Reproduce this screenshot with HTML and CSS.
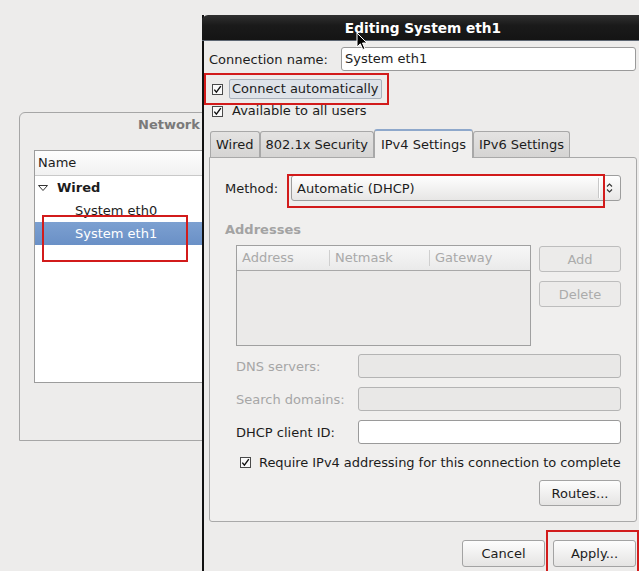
FILE: index.html
```html
<!DOCTYPE html>
<html>
<head>
<meta charset="utf-8">
<link rel="stylesheet" href="styles.css">
</head>
<body>
<div class="desktop">
  <div class="netwin">
    <div class="netwin-title">Network Connections</div>
    <div class="tree">
      <div class="tree-head">Name</div>
      <div class="tree-row group"><svg class="expander" width="10" height="6" viewBox="0 0 10 6"><path d="M0.5 0.5 H9.5 L5 5.5 Z" fill="none" stroke="#333" stroke-width="1"/></svg>Wired</div>
      <div class="tree-row child">System eth0</div>
      <div class="tree-row child selected">System eth1</div>
    </div>
  </div>

  <div class="dialog">
    <div class="titlebar">Editing System eth1</div>
    <div class="dlg-body">
      <div class="conn-row">
        <span class="conn-label">Connection name:</span>
        <div class="entry conn-entry">System eth1</div>
      </div>
      <div class="check-row first">
        <svg class="cb" width="11" height="11" viewBox="0 0 11 11"><rect x="0.5" y="0.5" width="10" height="10" fill="#fafafa" stroke="#4a4a4a"/><path d="M2.3 5.6 L4.4 8.2 L8.8 2.2" fill="none" stroke="#111" stroke-width="1.4"/></svg>
        <span class="cb-text prelight">Connect automatically</span>
      </div>
      <div class="check-row">
        <svg class="cb" width="11" height="11" viewBox="0 0 11 11"><rect x="0.5" y="0.5" width="10" height="10" fill="#fafafa" stroke="#4a4a4a"/><path d="M2.3 5.6 L4.4 8.2 L8.8 2.2" fill="none" stroke="#111" stroke-width="1.4"/></svg>
        <span class="cb-text">Available to all users</span>
      </div>

      <div class="notebook">
        <div class="tabs">
          <div class="tab">Wired</div>
          <div class="tab">802.1x Security</div>
          <div class="tab active">IPv4 Settings</div>
          <div class="tab">IPv6 Settings</div>
        </div>
        <div class="page">
          <div class="method-row">
            <span class="method-label">Method:</span>
            <div class="combo">
              <span class="combo-text">Automatic (DHCP)</span>
              <span class="combo-sep"></span>
              <svg class="combo-arrows" width="7" height="12" viewBox="0 0 7 12"><path d="M1 4.5 L3.5 2 L6 4.5 M1 7.5 L3.5 10 L6 7.5" fill="none" stroke="#333" stroke-width="1.1"/></svg>
            </div>
          </div>
          <div class="section-title">Addresses</div>
          <div class="addr-area">
            <div class="addr-table">
              <div class="addr-head">
                <span class="col c1">Address</span>
                <span class="col c2">Netmask</span>
                <span class="col c3">Gateway</span>
              </div>
            </div>
            <div class="addr-buttons">
              <button class="btn disabled">Add</button>
              <button class="btn disabled">Delete</button>
            </div>
          </div>
          <div class="form-grid">
            <span class="flabel disabled">DNS servers:</span>
            <div class="entry disabled"></div>
            <span class="flabel disabled">Search domains:</span>
            <div class="entry disabled"></div>
            <span class="flabel">DHCP client ID:</span>
            <div class="entry"></div>
          </div>
          <div class="require-row">
            <svg class="cb" width="11" height="11" viewBox="0 0 11 11"><rect x="0.5" y="0.5" width="10" height="10" fill="#fafafa" stroke="#4a4a4a"/><path d="M2.3 5.6 L4.4 8.2 L8.8 2.2" fill="none" stroke="#111" stroke-width="1.4"/></svg>
            <span class="require-text">Require IPv4 addressing for this connection to complete</span>
          </div>
          <div class="routes-row"><button class="btn">Routes...</button></div>
        </div>
      </div>

      <div class="actions">
        <button class="btn">Cancel</button>
        <button class="btn">Apply...</button>
      </div>
    </div>
  </div>

  <div class="mark mark-auto"></div>
  <div class="mark mark-eth1"></div>
  <div class="mark mark-method"></div>
  <div class="mark mark-apply"></div>

  <svg class="cursor" width="13" height="20" viewBox="0 0 13 20"><path d="M1 1 L1 15 L4.3 11.8 L6.8 17.5 L8.9 16.6 L6.5 11 L11 11 Z" fill="#000" stroke="#fff" stroke-width="1" stroke-linejoin="round"/></svg>
</div>
</body>
</html>
```

FILE: styles.css
```css
* { box-sizing: border-box; }
html, body { margin: 0; padding: 0; }
body {
  background: #edeceb;
  font-family: "DejaVu Sans", sans-serif;
  font-size: 13px;
  color: #1c1c1c;
  width: 639px;
  height: 571px;
  overflow: hidden;
}
.desktop {
  position: relative;
  width: 639px;
  height: 571px;
  overflow: hidden;
}

/* background window */
.netwin {
  position: absolute;
  left: 19px;
  top: 112px;
  width: 330px;
  height: 329px;
  border: 1px solid #a6a6a6;
  border-radius: 6px 0 0 0;
  padding-left: 14px;
  display: flex;
  flex-direction: column;
}
.netwin-title {
  font-weight: bold;
  color: #7a7a7a;
  padding: 4px 0 0 104px;
  line-height: 16px;
  height: 37px;
  white-space: nowrap;
}
.tree {
  width: 300px;
  height: 233px;
  background: #fff;
  border: 1px solid #9c9c9c;
}
.tree-head {
  height: 25px;
  line-height: 24px;
  padding-left: 3px;
  border-bottom: 1px solid #c9c9c9;
  background: linear-gradient(#fdfdfd, #f1f1f1);
}
.tree-row {
  height: 23px;
  line-height: 23px;
  display: flex;
  align-items: center;
  white-space: nowrap;
}
.tree-row.group {
  font-weight: bold;
  padding-left: 3px;
}
.expander { margin-right: 9px; }
.tree-row.child { padding-left: 40px; }
.tree-row.selected {
  background: linear-gradient(#7ca0d1, #6a90c6);
  color: #fff;
}

/* dialog */
.dialog {
  position: absolute;
  left: 202px;
  top: 15px;
  width: 440px;
  height: 560px;
  border-left: 2px solid #111;
  background: #edeceb;
  display: flex;
  flex-direction: column;
}
.titlebar {
  height: 26px;
  margin-left: -2px;
  border-radius: 6px 0 0 0;
  background: linear-gradient(#303030, #1a1a1a 40%, #141414);
  box-shadow: inset 0 -1px 0 #5d6672;
  color: #fff;
  font-weight: bold;
  font-size: 13.7px;
  text-align: center;
  line-height: 27px;
  padding-left: 2px;
}
.dlg-body {
  padding: 6px 5px 0 5px;
  display: flex;
  flex-direction: column;
}
.conn-row {
  display: flex;
  align-items: center;
  height: 24px;
}
.conn-label { flex: 0 0 132px; }
.entry {
  height: 24px;
  border: 1px solid #9a9a9a;
  border-radius: 3px;
  background: #fff;
  padding-left: 3px;
  line-height: 22px;
}
.conn-entry { flex: 1; margin-right: 1px; }
.entry.disabled {
  background: #e9e8e7;
  border-color: #b4b4b4;
}
.check-row {
  display: flex;
  align-items: center;
  height: 20px;
  margin-top: 2px;
  padding-left: 3px;
}
.check-row.first { margin-top: 8px; }
.cb { flex: 0 0 11px; }
.cb-text {
  margin-left: 6px;
  padding: 0 2px;
  height: 20px;
  line-height: 18px;
  border: 1px solid transparent;
  border-radius: 2px;
}
.prelight {
  background: #dfe3e9;
  border-color: #a9b1bb;
}

/* notebook */
.notebook {
  margin-top: 8px;
  display: flex;
  flex-direction: column;
}
.tabs {
  display: flex;
  align-items: flex-end;
  padding-left: 1px;
  height: 28px;
  position: relative;
  z-index: 1;
}
.tab {
  height: 26px;
  line-height: 25px;
  padding: 0 5px;
  border: 1px solid #a8a8a8;
  border-bottom: none;
  border-radius: 3px 3px 0 0;
  background: linear-gradient(#e4e3e2, #d5d4d3);
  white-space: nowrap;
}
.tab.active {
  height: 29px;
  line-height: 27px;
  padding: 0 6px;
  margin-bottom: -1px;
  background: #f0efee;
  border-top: 2px solid #8ea8cb;
}
.page {
  border: 1px solid #a9a9a9;
  border-radius: 0 3px 3px 3px;
  background: #f0efee;
  padding: 17px 15px 15px 15px;
  display: flex;
  flex-direction: column;
}
.method-row {
  display: flex;
  align-items: center;
  height: 26px;
}
.method-label { flex: 0 0 66px; }
.combo {
  flex: 1;
  height: 26px;
  border: 1px solid #9d9d9d;
  border-radius: 3px;
  background: linear-gradient(#fefefe, #e7e6e5);
  display: flex;
  align-items: center;
  padding-left: 5px;
}
.combo-text { flex: 1; }
.combo-sep {
  width: 1px;
  height: 20px;
  background: #c8c8c8;
  box-shadow: 1px 0 0 #fff;
}
.combo-arrows { margin: 0 7px 0 7px; }

.section-title {
  margin-top: 21px;
  font-weight: bold;
  color: #a3a3a3;
  line-height: 16px;
}
.addr-area {
  margin-top: 7px;
  margin-left: 11px;
  display: flex;
  gap: 8px;
}
.addr-table {
  width: 295px;
  height: 101px;
  border: 1px solid #a0a0a0;
  background: #ebeae9;
}
.addr-head {
  display: flex;
  height: 25px;
  border-bottom: 1px solid #a8a8a8;
  background: linear-gradient(#f7f7f7, #eaeaea);
  align-items: center;
}
.col {
  color: #a9a9a9;
  padding-left: 5px;
  height: 16px;
  line-height: 16px;
}
.c1 { width: 92px; }
.c2 { width: 100px; border-left: 1px solid #cfcfcf; }
.c3 { flex: 1; border-left: 1px solid #cfcfcf; }
.addr-buttons {
  width: 82px;
  display: flex;
  flex-direction: column;
  gap: 9px;
  padding-top: 1px;
}
.btn {
  font: inherit;
  color: #1c1c1c;
  width: 82px;
  height: 26px;
  padding: 0;
  border: 1px solid #a3a3a3;
  border-radius: 3px;
  background: linear-gradient(#fdfdfd, #e5e4e3);
}
.btn.disabled {
  color: #ababab;
  background: #ecebea;
  border-color: #bdbdbd;
}

.form-grid {
  margin-top: 8px;
  margin-left: 11px;
  display: grid;
  grid-template-columns: 122px 1fr;
  row-gap: 9px;
  align-items: center;
}
.flabel { white-space: nowrap; }
.flabel.disabled { color: #a6a6a6; }

.require-row {
  margin-top: 8px;
  margin-left: 15px;
  height: 20px;
  display: flex;
  align-items: center;
  gap: 8px;
  white-space: nowrap;
}
.require-text { letter-spacing: -0.05px; }
.routes-row {
  margin-top: 8px;
  display: flex;
  justify-content: flex-end;
}

.actions {
  margin-top: 18px;
  display: flex;
  justify-content: flex-end;
  gap: 8px;
  padding-right: 1px;
}
.actions .btn { width: 83px; height: 27px; }

/* annotation marks */
.mark {
  position: absolute;
  border: 2px solid #d21b1b;
  z-index: 5;
}
.mark-auto { left: 204px; top: 73px; width: 185px; height: 32px; }
.mark-eth1 { left: 42px; top: 215px; width: 146px; height: 47px; }
.mark-method { left: 287px; top: 174px; width: 318px; height: 34px; }
.mark-apply { left: 546px; top: 530px; width: 93px; height: 45px; }

.cursor {
  position: absolute;
  left: 356px;
  top: 32px;
  z-index: 6;
}
```
